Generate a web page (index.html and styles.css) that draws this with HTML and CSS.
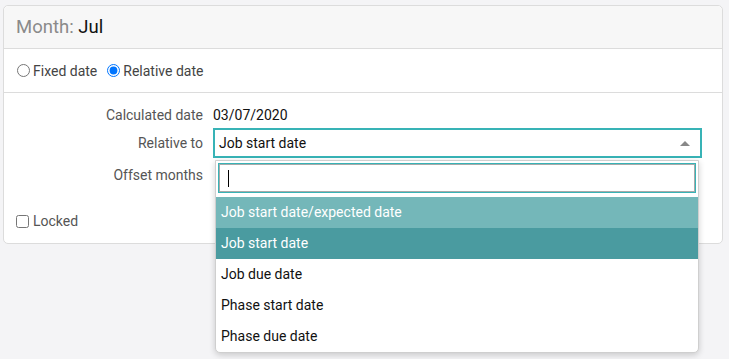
FILE: index.html
```html
<!DOCTYPE html>
<html lang="en">
<head>
  <meta charset="UTF-8">
  <meta name="viewport" content="width=device-width, initial-scale=1.0">
  <title>Month: Jul</title>
  <link rel="stylesheet" href="styles.css">
</head>
<body>
  <div class="card">
    <div class="card-header">
      <span class="muted">Month:</span> <span class="month">Jul</span>
    </div>

    <div class="mode-row">
      <label class="opt"><input type="radio" name="mode"> Fixed date</label>
      <label class="opt"><input type="radio" name="mode" checked> Relative date</label>
    </div>

    <div class="form-body">
      <div class="form-grid">
        <div class="lbl">Calculated date</div>
        <div class="val">03/07/2020</div>

        <div class="lbl">Relative to</div>
        <div class="val select-cell">
          <div class="select-box">
            <span>Job start date</span>
            <span class="arrow"></span>
          </div>
          <div class="dropdown">
            <div class="search-wrap">
              <div class="search"><span class="caret"></span></div>
            </div>
            <ul class="results">
              <li class="hover">Job start date/expected date</li>
              <li class="selected">Job start date</li>
              <li>Job due date</li>
              <li>Phase start date</li>
              <li>Phase due date</li>
            </ul>
          </div>
        </div>

        <div class="lbl">Offset months</div>
        <div class="val"><div class="offset-input"></div></div>
      </div>

      <label class="locked"><input type="checkbox"> Locked</label>
    </div>
  </div>
</body>
</html>
```

FILE: styles.css
```css
:root {
  --teal: #38b3b6;
  --teal-light: #74b7b9;
  --teal-dark: #4a9ba0;
  --borda: #dcdcdc;
  --texto: #222222;
  --rotulo: #555555;
}

html, body {
  min-height: 100%;
}

body {
  margin: 0;
  min-height: 359px;
  background-color: #f4f4f6;
  font-family: Roboto, "Liberation Sans", sans-serif;
  font-size: 14px;
  color: var(--texto);
}

.card {
  margin: 5px 0 0 3px;
  width: 718px;
  background-color: #ffffff;
  border: 1px solid var(--borda);
  border-radius: 5px;
}

.card-header {
  height: 42px;
  line-height: 42px;
  padding: 0 12px;
  background-color: #f7f7f7;
  border-bottom: 1px solid var(--borda);
  border-radius: 5px 5px 0 0;
  font-size: 18.5px;
}

.muted {
  color: #8a8a8a;
}

.month {
  color: #111111;
}

.mode-row {
  height: 43px;
  display: flex;
  align-items: center;
  gap: 9px;
  padding: 0 12px;
  border-bottom: 1px solid var(--borda);
  color: #444444;
}

.opt {
  display: flex;
  align-items: center;
}

.opt input {
  margin: 0 3px 0 1px;
}

.form-body {
  padding: 11px 20px 14px 0;
}

.form-grid {
  display: grid;
  grid-template-columns: 199px 1fr;
  column-gap: 10px;
  grid-template-rows: 22px 30px 30px;
  row-gap: 2px;
  align-items: center;
}

.lbl {
  text-align: right;
  color: var(--rotulo);
}

.val {
  color: #111111;
}

.select-cell {
  position: relative;
}

.select-box {
  height: 26px;
  border: 2px solid var(--teal);
  display: flex;
  align-items: center;
  justify-content: space-between;
  padding: 0 10px 0 4px;
}

.arrow {
  width: 0;
  height: 0;
  border-left: 5px solid transparent;
  border-right: 5px solid transparent;
  border-bottom: 5px solid #888888;
}

.offset-input {
  height: 28px;
}

.dropdown {
  position: absolute;
  top: 32px;
  left: 2px;
  width: 482px;
  background-color: #ffffff;
  border: 1px solid #cfcfcf;
  border-radius: 0 0 5px 5px;
  box-shadow: 0 2px 6px rgba(0, 0, 0, 0.18);
  z-index: 5;
}

.search-wrap {
  padding: 3px 3px 5px 3px;
}

.search {
  height: 26px;
  border: 1px solid #a9a9a9;
  outline: 1px solid var(--teal);
  display: flex;
  align-items: center;
  padding-left: 8px;
}

.caret {
  width: 1px;
  height: 17px;
  background-color: #000000;
}

.results {
  list-style: none;
  margin: 0;
  padding: 0;
}

.results li {
  height: 31px;
  line-height: 31px;
  padding-left: 5px;
  color: #111111;
}

.results li.hover {
  background-color: var(--teal-light);
  color: #ffffff;
}

.results li.selected {
  background-color: var(--teal-dark);
  color: #ffffff;
}

.locked {
  display: flex;
  align-items: center;
  margin: 23px 0 0 10px;
  color: var(--rotulo);
}

.locked input {
  margin: 0 4px 0 2px;
}
```
